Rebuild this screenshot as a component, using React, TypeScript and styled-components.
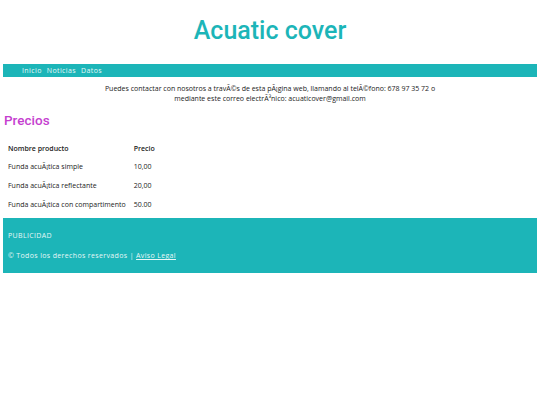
import styled, { createGlobalStyle } from "styled-components";

const GlobalStyle = createGlobalStyle`
    html, body {
        margin: 0;
        padding: 0;
        background: #fff;
    }
    body {
        padding: 0 3px;
        font-family: "Open Sans", "Liberation Sans", sans-serif;
        color: #222;
    }
`;

const teal = "#1cb5b8";

const Header = styled.header`
    display: flex;
    justify-content: center;
    padding: 16px 0 18px;
`;

const Title = styled.h1`
    margin: 0;
    font-family: Roboto, "Liberation Sans", sans-serif;
    font-weight: 500;
    font-size: 25px;
    line-height: 30px;
    color: ${teal};
`;

const NavBar = styled.nav`
    display: flex;
    gap: 5px;
    align-items: center;
    height: 13px;
    padding: 0 19px;
    background: ${teal};
`;

const NavLink = styled.a`
    color: #e6f7f7;
    font-size: 7px;
    letter-spacing: 0.4px;
    text-decoration: none;
`;

const Contact = styled.p`
    margin: 7px 0 0;
    text-align: center;
    font-size: 7px;
    line-height: 10px;
    color: #222;
`;

const SectionTitle = styled.h2`
    margin: 8px 0 11px 1px;
    font-family: Roboto, "Liberation Sans", sans-serif;
    font-weight: 500;
    font-size: 13.5px;
    line-height: 16px;
    color: #c53fcf;
`;

const PriceTable = styled.table`
    border-collapse: collapse;
    margin-left: 2px;
    font-size: 7px;
`;

const Cell = styled.td<{ $head?: boolean }>`
    padding: 0 5px 0 3px;
    height: 18.6px;
    font-weight: ${p => (p.$head ? 600 : 400)};
    color: #222;
    white-space: nowrap;
`;

const Footer = styled.footer`
    margin-top: 5px;
    padding: 13px 5px 12px;
    background: ${teal};
    color: #e6f7f7;
    font-size: 7px;
    letter-spacing: 0.35px;
`;

const FooterLine = styled.div`
    line-height: 10px;
    & + & {
        margin-top: 10px;
    }
`;

const FooterLink = styled.a`
    color: #e6f7f7;
    text-decoration: underline;
`;

const products = [
    { name: "Funda acuÃ¡tica simple", price: "10,00" },
    { name: "Funda acuÃ¡tica reflectante", price: "20,00" },
    { name: "Funda acuÃ¡tica con compartimento", price: "50.00" },
];

export default function App() {
    return (
        <>
            <GlobalStyle />
            <Header>
                <Title>Acuatic cover</Title>
            </Header>
            <NavBar>
                <NavLink href="#">Inicio</NavLink>
                <NavLink href="#">Noticias</NavLink>
                <NavLink href="#">Datos</NavLink>
            </NavBar>
            <Contact>
                Puedes contactar con nosotros a travÃ©s de esta pÃ¡gina web, llamando al telÃ©fono: 678 97 35 72 o
                <br />
                mediante este correo electrÃ³nico: acuaticover@gmail.com
            </Contact>
            <SectionTitle>Precios</SectionTitle>
            <PriceTable>
                <tbody>
                    <tr>
                        <Cell $head>Nombre producto</Cell>
                        <Cell $head>Precio</Cell>
                    </tr>
                    {products.map(p => (
                        <tr key={p.name}>
                            <Cell>{p.name}</Cell>
                            <Cell>{p.price}</Cell>
                        </tr>
                    ))}
                </tbody>
            </PriceTable>
            <Footer>
                <FooterLine>PUBLICIDAD</FooterLine>
                <FooterLine>
                    © Todos los derechos reservados | <FooterLink href="#">Aviso Legal</FooterLink>
                </FooterLine>
            </Footer>
        </>
    );
}
